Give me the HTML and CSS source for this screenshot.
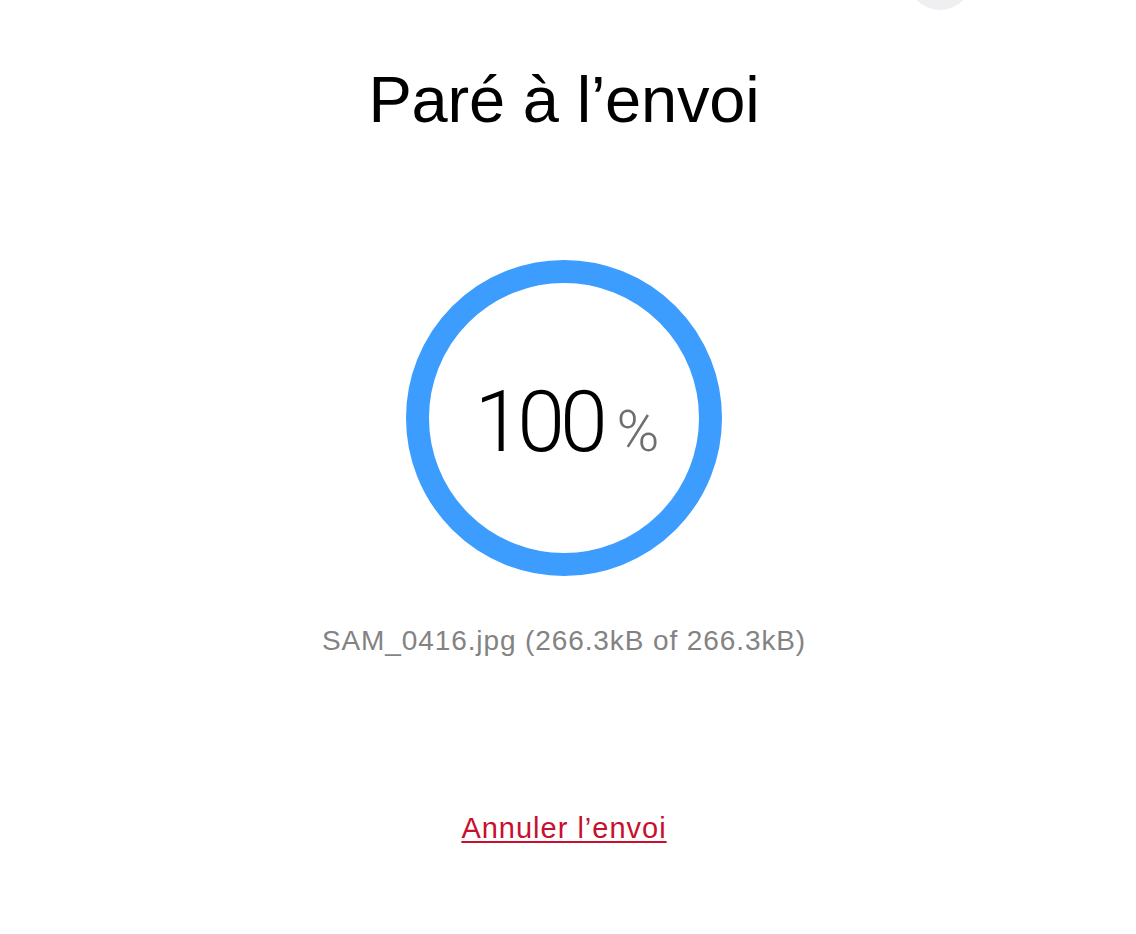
FILE: index.html
```html
<!DOCTYPE html>
<html lang="fr">
<head>
<meta charset="utf-8">
<title>Paré à l’envoi</title>
<link rel="stylesheet" href="styles.css">
</head>
<body>
<div class="close-btn" aria-hidden="true"></div>
<main class="page">
  <h1 class="title">Paré à l’envoi</h1>
  <div class="progress">
    <svg class="ring" width="316" height="316" viewBox="0 0 316 316">
      <circle cx="158" cy="158" r="146.5" fill="none" stroke="#3d9dff" stroke-width="23"/>
    </svg>
    <div class="pct"><span class="num">100</span><span class="sign">%</span></div>
  </div>
  <p class="file">SAM_0416.jpg (266.3kB of 266.3kB)</p>
  <a class="cancel" href="#">Annuler l’envoi</a>
</main>
</body>
</html>
```
FILE: styles.css
```css
html, body {
  margin: 0;
  padding: 0;
  background: #ffffff;
}
body {
  width: 1136px;
  height: 934px;
  overflow: hidden;
  position: relative;
  font-family: "Liberation Sans", Arial, sans-serif;
}
.close-btn {
  position: absolute;
  left: 908px;
  top: -54px;
  width: 64px;
  height: 64px;
  border-radius: 50%;
  background: #efeff1;
}
.page {
  display: flex;
  flex-direction: column;
  align-items: center;
  padding-right: 8px;
}
.title {
  margin: 62px 0 0;
  font-size: 65px;
  font-weight: normal;
  line-height: 76px;
  color: #000;
  letter-spacing: -0.2px;
}
.progress {
  position: relative;
  width: 316px;
  height: 316px;
  margin-top: 122px;
}
.ring {
  display: block;
}
.pct {
  position: absolute;
  inset: 0;
  display: flex;
  align-items: baseline;
  justify-content: center;
  padding-top: 112px;
  padding-left: 6px;
}
.num {
  font-family: Roboto, "Liberation Sans", sans-serif;
  font-weight: 300;
  font-size: 86px;
  line-height: 100px;
  color: #000;
  letter-spacing: -5px;
}
.sign {
  font-family: Roboto, "Liberation Sans", sans-serif;
  font-weight: 300;
  font-size: 58px;
  color: #6f6f6f;
  margin-left: 14px;
}
.file {
  margin: 48px 0 0;
  font-size: 28px;
  line-height: 34px;
  color: #838383;
  letter-spacing: 0.9px;
}
.cancel {
  margin-top: 153px;
  font-size: 29px;
  line-height: 34px;
  color: #c8102e;
  letter-spacing: 1px;
  text-decoration: underline;
  text-underline-offset: 3px;
  text-decoration-thickness: 2px;
}
```
